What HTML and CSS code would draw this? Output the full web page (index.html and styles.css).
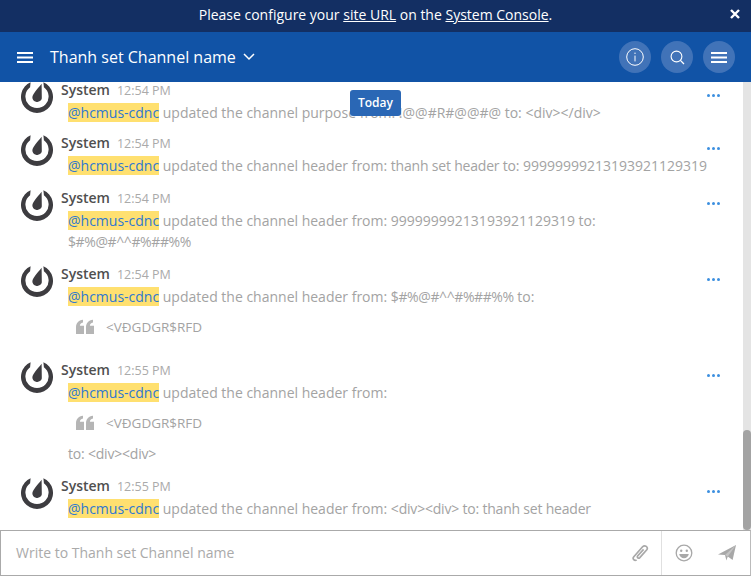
FILE: index.html
```html
<!DOCTYPE html>
<html lang="en">
<head>
  <meta charset="UTF-8">
  <title>Thanh set Channel name</title>
  <link rel="stylesheet" href="styles.css">
</head>
<body>
  <svg class="symbols" width="0" height="0">
    <symbol id="logo" viewBox="0 0 32 32">
      <path d="M9.6 1.3 A16 16 0 1 0 22.4 1.3 L22.9 6.2 A11.6 11.6 0 1 1 9.1 6.2 Z" fill="#3d3c40"/>
      <path d="M20.6 2.8 L20.8 15.4 A4.8 4.8 0 0 1 11.5 17.6 C10.9 15.2 12.2 13.2 13.6 11.4 C15.6 8.6 18.4 5.6 20.6 2.8 Z" fill="#3d3c40"/>
    </symbol>
    <symbol id="quote" viewBox="0 0 20 16">
      <path d="M1 15 V8.5 C1 4 3.4 1.4 8 0.8 V3.6 C5.8 4.2 5 5.2 4.9 6.8 H9 V15 Z M11 15 V8.5 C11 4 13.4 1.4 18 0.8 V3.6 C15.8 4.2 15 5.2 14.9 6.8 H19 V15 Z" fill="#b5b5b5"/>
    </symbol>
  </svg>

  <div class="banner">
    <span>Please configure your <a href="#">site URL</a> on the <a href="#">System Console</a>.</span>
    <svg class="banner__close" width="10" height="10" viewBox="0 0 10 10"><path d="M1 1 L9 9 M9 1 L1 9" stroke="#fff" stroke-width="2.4"/></svg>
  </div>

  <header class="channel-header">
    <svg class="channel-header__menu" width="16" height="11" viewBox="0 0 16 11"><path d="M0 1 H16 M0 5.5 H16 M0 10 H16" stroke="#fff" stroke-width="2"/></svg>
    <h1 class="channel-header__title">Thanh set Channel name</h1>
    <svg class="channel-header__caret" width="12" height="8" viewBox="0 0 12 8"><path d="M1 1 L6 6 L11 1" fill="none" stroke="#fff" stroke-width="1.5"/></svg>
    <div class="channel-header__actions">
      <button class="round-btn">
        <svg width="18" height="18" viewBox="0 0 18 18"><circle cx="9" cy="9" r="8.3" fill="none" stroke="#fff" stroke-width="1"/><path d="M9 7.6 V13.4 M9 4.6 V6" stroke="#fff" stroke-width="1"/></svg>
      </button>
      <button class="round-btn">
        <svg width="15" height="15" viewBox="0 0 15 15"><circle cx="6.5" cy="6.5" r="5.4" fill="none" stroke="#fff" stroke-width="1.1"/><path d="M10.4 10.4 L14 14" stroke="#fff" stroke-width="1.3"/></svg>
      </button>
      <button class="round-btn">
        <svg width="16" height="11" viewBox="0 0 16 11"><path d="M0 1 H16 M0 5.5 H16 M0 10 H16" stroke="#fff" stroke-width="2"/></svg>
      </button>
    </div>
  </header>

  <main class="channel">
    <div class="today">Today</div>
    <div class="posts">
      <div class="post post--first">
        <svg class="post__avatar"><use href="#logo"/></svg>
        <div class="post__content">
          <div class="post__head"><span class="post__name">System</span><time class="post__time">12:54 PM</time></div>
          <p class="post__text"><span class="mention">@hcmus-cdnc</span> updated the channel purpose from: !@@#R#@@#@ to: &lt;div&gt;&lt;/div&gt;</p>
        </div>
        <div class="post__dots"><i></i><i></i><i></i></div>
      </div>
      <div class="post">
        <svg class="post__avatar"><use href="#logo"/></svg>
        <div class="post__content">
          <div class="post__head"><span class="post__name">System</span><time class="post__time">12:54 PM</time></div>
          <p class="post__text"><span class="mention">@hcmus-cdnc</span> updated the channel header from: <span class="tight">thanh set header to:</span> 99999999213193921129319</p>
        </div>
        <div class="post__dots"><i></i><i></i><i></i></div>
      </div>
      <div class="post">
        <svg class="post__avatar"><use href="#logo"/></svg>
        <div class="post__content">
          <div class="post__head"><span class="post__name">System</span><time class="post__time">12:54 PM</time></div>
          <p class="post__text"><span class="mention">@hcmus-cdnc</span> updated the channel header from: 99999999213193921129319 to: <span class="tighter">$#%@#^^#%##%%</span></p>
        </div>
        <div class="post__dots"><i></i><i></i><i></i></div>
      </div>
      <div class="post">
        <svg class="post__avatar"><use href="#logo"/></svg>
        <div class="post__content">
          <div class="post__head"><span class="post__name">System</span><time class="post__time">12:54 PM</time></div>
          <p class="post__text"><span class="mention">@hcmus-cdnc</span> updated the channel header from: <span class="tighter">$#%@#^^#%##%%</span> to:</p>
          <blockquote class="post__quote"><svg width="20" height="16"><use href="#quote"/></svg>&lt;VĐGDGR$RFD</blockquote>
        </div>
        <div class="post__dots"><i></i><i></i><i></i></div>
      </div>
      <div class="post">
        <svg class="post__avatar"><use href="#logo"/></svg>
        <div class="post__content">
          <div class="post__head"><span class="post__name">System</span><time class="post__time">12:55 PM</time></div>
          <p class="post__text"><span class="mention">@hcmus-cdnc</span> updated the channel header from:</p>
          <blockquote class="post__quote"><svg width="20" height="16"><use href="#quote"/></svg>&lt;VĐGDGR$RFD</blockquote>
          <p class="post__text"><span class="tight">to: &lt;div&gt;&lt;div&gt;</span></p>
        </div>
        <div class="post__dots"><i></i><i></i><i></i></div>
      </div>
      <div class="post">
        <svg class="post__avatar"><use href="#logo"/></svg>
        <div class="post__content">
          <div class="post__head"><span class="post__name">System</span><time class="post__time">12:55 PM</time></div>
          <p class="post__text"><span class="mention">@hcmus-cdnc</span> updated the channel header from: <span class="tight">&lt;div&gt;&lt;div&gt; to: thanh set header</span></p>
        </div>
        <div class="post__dots"><i></i><i></i><i></i></div>
      </div>
    </div>
    <div class="scrollbar"><div class="scrollbar__thumb"></div></div>
  </main>

  <footer class="composer">
    <div class="composer__input">Write to Thanh set Channel name</div>
    <svg class="composer__clip" width="18" height="18" viewBox="0 0 18 18"><path d="M4.6 15.8 C2.6 17.4 0 15 1.8 12.8 L10.6 2.8 C12.8 0.4 16.8 3 14.8 5.8 L7.8 13.6 C6.4 15 4.6 13.4 5.8 11.8 L11.6 5.4" fill="none" stroke="#a8a8a8" stroke-width="1.7"/></svg>
    <div class="composer__actions">
      <svg width="18" height="18" viewBox="0 0 18 18"><circle cx="9" cy="9" r="7.8" fill="none" stroke="#a8a8a8" stroke-width="1.3"/><circle cx="6.2" cy="6.8" r="1.2" fill="#a8a8a8"/><circle cx="11.8" cy="6.8" r="1.2" fill="#a8a8a8"/><path d="M4.2 10 H13.8 C13.4 12.6 11.4 14.2 9 14.2 C6.6 14.2 4.6 12.6 4.2 10 Z" fill="#a8a8a8"/></svg>
      <svg width="18" height="16" viewBox="0 0 18 16"><path d="M0 9.5 L18 0 L14.6 15 L9.8 11.6 L8.4 15.6 L7 10 Z" fill="#a8a8a8"/><path d="M7 10 L18 0 L9.8 11.6" fill="#c4c4c4"/></svg>
    </div>
  </footer>
</body>
</html>
```

FILE: styles.css
```css
* {
  box-sizing: border-box;
}
html,
body {
  height: 100%;
}
body {
  display: flex;
  flex-direction: column;
  margin: 0;
  overflow: hidden;
  background-color: white;
  font-family: 'Open Sans', sans-serif;
  font-size: 14px;
  color: #a3a3a3;
}
.symbols {
  display: none;
}

/* Top notice */
.banner {
  position: relative;
  flex: none;
  height: 32px;
  background-color: #132f63;
  color: white;
  line-height: 30px;
  text-align: center;
}
.banner a {
  color: white;
}
.banner__close {
  position: absolute;
  top: 9px;
  right: 11px;
}

/* Channel header */
.channel-header {
  display: flex;
  flex: none;
  align-items: center;
  height: 50px;
  padding: 0 16px 0 17px;
  background-color: #1153a6;
  color: white;
}
.channel-header__title {
  margin: 0 0 0 17px;
  font-size: 16px;
  font-weight: 400;
}
.channel-header__caret {
  margin-left: 7px;
}
.channel-header__actions {
  display: flex;
  gap: 10px;
  margin-left: auto;
}
.round-btn {
  display: flex;
  align-items: center;
  justify-content: center;
  width: 32px;
  height: 32px;
  padding: 0;
  border: none;
  border-radius: 50%;
  background-color: #4173b8;
}

/* Messages */
.channel {
  position: relative;
  display: flex;
  flex: 1;
  min-height: 0;
}
.today {
  position: absolute;
  top: 8px;
  left: 350px;
  z-index: 2;
  width: 51px;
  height: 26px;
  border-radius: 3px;
  background-color: #2a67b5;
  color: white;
  font-size: 12px;
  font-weight: 600;
  line-height: 26px;
  text-align: center;
}
.posts {
  flex: 1;
  min-width: 0;
  overflow: hidden;
}
.post {
  position: relative;
  display: flex;
  height: 55px;
  padding: 4px 30px 0 21px;
}
.post--first {
  height: 49px;
  margin-top: -1px;
  padding-top: 0;
}
.post:nth-child(3) {
  height: 76px;
}
.post:nth-child(4) {
  height: 96px;
}
.post:nth-child(5) {
  height: 116px;
}
.post__avatar {
  flex: none;
  width: 32px;
  height: 32px;
}
.post__content {
  flex: 1;
  min-width: 0;
  margin-left: 8px;
}
.post__head {
  display: flex;
  align-items: baseline;
  gap: 7px;
  height: 20px;
  line-height: 18px;
}
.post__name {
  color: #4f4f4f;
  font-weight: 600;
}
.post__time {
  color: #aaa;
  font-size: 12.5px;
}
.post__text {
  margin: 1px 0 0;
  padding-left: 7px;
  line-height: 21px;
}
.post__quote {
  display: flex;
  align-items: center;
  gap: 11px;
  height: 20px;
  margin: 10px 0;
  padding-left: 14px;
  font-size: 13.5px;
}
.post__dots {
  position: absolute;
  top: 17px;
  right: 23px;
  display: flex;
  gap: 2px;
}
.post--first .post__dots {
  top: 13px;
}
.post__dots i {
  width: 3px;
  height: 3px;
  border-radius: 50%;
  background-color: #3c8fe0;
}
.mention {
  background-color: #ffe070;
  color: #2f78d0;
}
.tight {
  letter-spacing: -0.2px;
}
.tighter {
  letter-spacing: -0.4px;
}

/* Scrollbar */
.scrollbar {
  flex: none;
  width: 8px;
  padding-top: 348px;
  background-color: #e4e4e4;
}
.scrollbar__thumb {
  height: 100px;
  border-radius: 4px;
  background-color: #a3a3a3;
}

/* Message box */
.composer {
  display: flex;
  flex: none;
  align-items: center;
  height: 46px;
  border: 1px solid #aaa;
  border-right-color: #bbb;
}
.composer__input {
  flex: 1;
  padding: 0 0 2px 15px;
  color: #aaa;
}
.composer__clip {
  margin-right: 11px;
}
.composer__actions {
  display: flex;
  align-items: center;
  gap: 25px;
  height: 100%;
  padding: 0 14px 0 13px;
  border-left: 1px solid #e0e0e0;
}
```
